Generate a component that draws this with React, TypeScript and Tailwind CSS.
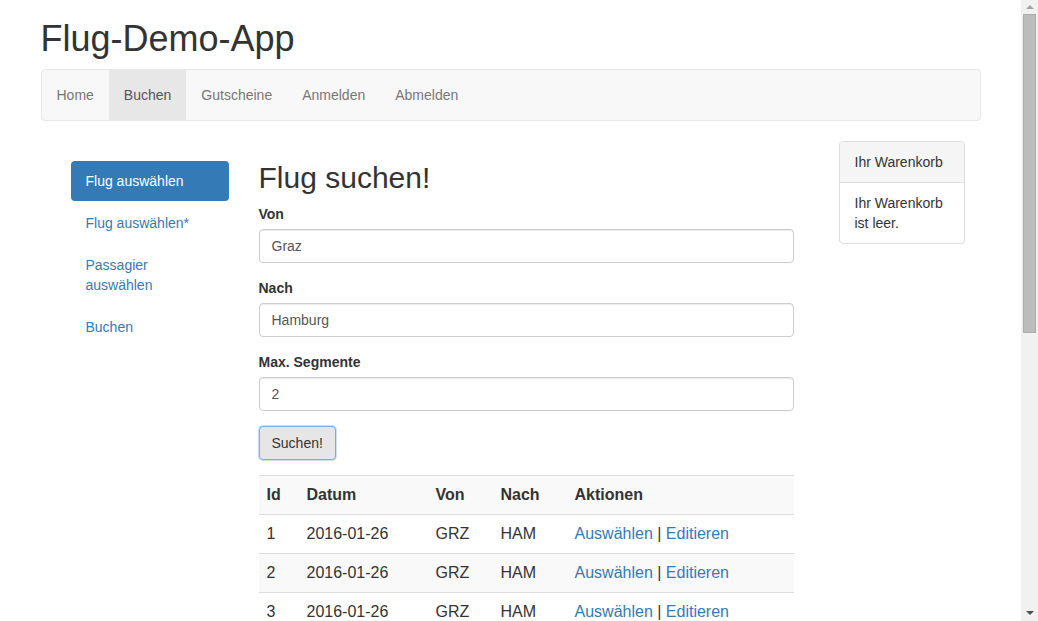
import React from "react";

const menu = [
  { label: "Home", active: false },
  { label: "Buchen", active: true },
  { label: "Gutscheine", active: false },
  { label: "Anmelden", active: false },
  { label: "Abmelden", active: false },
];

const pills = [
  { label: "Flug auswählen", active: true },
  { label: "Flug auswählen*", active: false },
  { label: "Passagier auswählen", active: false },
  { label: "Buchen", active: false },
];

const flights = [
  { id: 1, datum: "2016-01-26", von: "GRZ", nach: "HAM" },
  { id: 2, datum: "2016-01-26", von: "GRZ", nach: "HAM" },
  { id: 3, datum: "2016-01-26", von: "GRZ", nach: "HAM" },
];

function Field({ label, value }: { label: string; value: string }) {
  return (
    <div className="mb-[15px]">
      <label className="block mb-[5px] font-bold text-[14px] leading-[20px]">{label}</label>
      <input
        readOnly
        value={value}
        className="block w-full h-[34px] px-[12px] py-[6px] text-[14px] text-[#555] bg-white border border-[#ccc] rounded-[4px] shadow-[inset_0_1px_1px_rgba(0,0,0,0.075)] outline-none"
      />
    </div>
  );
}

export default function App() {
  return (
    <div className="flex h-[621px] overflow-hidden bg-white text-[#333] text-[14px] leading-[20px] font-['Liberation_Sans',Arial,sans-serif]">
      <div className="flex-1 overflow-hidden">
        <div className="w-[970px] mx-auto px-[15px]">
          <h1 className="mt-[19px] mb-[10px] text-[36px] leading-[1.1]">Flug-Demo-App</h1>

          <nav className="flex min-h-[50px] mb-[20px] bg-[#f8f8f8] border border-[#e7e7e7] rounded-[4px]">
            {menu.map((m) => (
              <a
                key={m.label}
                className={`block px-[15px] py-[15px] leading-[20px] ${
                  m.active ? "bg-[#e7e7e7] text-[#555]" : "text-[#777]"
                }`}
              >
                {m.label}
              </a>
            ))}
          </nav>

          <div className="flex items-start">
            {/* Seitennavigation */}
            <ul className="ml-[30px] mt-[20px] w-[158px] flex flex-col gap-[2px]">
              {pills.map((p) => (
                <li key={p.label}>
                  <a
                    className={`block px-[15px] py-[10px] rounded-[4px] ${
                      p.active ? "bg-[#337ab7] text-white" : "text-[#337ab7]"
                    }`}
                  >
                    {p.label}
                  </a>
                </li>
              ))}
            </ul>

            {/* Suche */}
            <div className="ml-[30px] w-[535px]">
              <h2 className="mt-[20px] mb-[10px] text-[30px] leading-[1.1]">Flug suchen!</h2>
              <Field label="Von" value="Graz" />
              <Field label="Nach" value="Hamburg" />
              <Field label="Max. Segmente" value="2" />
              <div className="mb-[15px]">
                <button className="h-[34px] px-[12px] text-[14px] text-[#333] bg-[#e6e6e6] border border-[#7fa8e4] rounded-[4px] shadow-[0_0_0_1px_rgba(120,160,225,0.35)]">
                  Suchen!
                </button>
              </div>

              <table className="w-full table-fixed border-collapse text-[16px] leading-[22px]">
                <thead>
                  <tr className="bg-[#f9f9f9]">
                    <th className="w-[40px] p-[8px] text-left font-bold border-t border-b border-[#ddd]">Id</th>
                    <th className="w-[129px] p-[8px] text-left font-bold border-t border-b border-[#ddd]">Datum</th>
                    <th className="w-[65px] p-[8px] text-left font-bold border-t border-b border-[#ddd]">Von</th>
                    <th className="w-[74px] p-[8px] text-left font-bold border-t border-b border-[#ddd]">Nach</th>
                    <th className="p-[8px] text-left font-bold border-t border-b border-[#ddd]">Aktionen</th>
                  </tr>
                </thead>
                <tbody>
                  {flights.map((f, i) => (
                    <tr key={f.id} className={i % 2 === 1 ? "bg-[#f9f9f9]" : ""}>
                      <td className="p-[8px] border-b border-[#ddd]">{f.id}</td>
                      <td className="p-[8px] border-b border-[#ddd]">{f.datum}</td>
                      <td className="p-[8px] border-b border-[#ddd]">{f.von}</td>
                      <td className="p-[8px] border-b border-[#ddd]">{f.nach}</td>
                      <td className="p-[8px] border-b border-[#ddd] whitespace-nowrap">
                        <a className="text-[#337ab7]">Auswählen</a> | <a className="text-[#337ab7]">Editieren</a>
                      </td>
                    </tr>
                  ))}
                </tbody>
              </table>
            </div>

            {/* Warenkorb */}
            <div className="ml-[45px] w-[126px] bg-white border border-[#ddd] rounded-[4px]">
              <div className="px-[15px] py-[10px] bg-[#f5f5f5] border-b border-[#ddd] rounded-t-[3px]">
                Ihr Warenkorb
              </div>
              <div className="px-[15px] py-[10px]">Ihr Warenkorb ist leer.</div>
            </div>
          </div>
        </div>
      </div>

      {/* Scrollbar */}
      <div className="w-[17px] h-full bg-[#f1f1f1] flex flex-col items-center">
        <div className="h-[14px] flex items-center justify-center">
          <svg width="8" height="4" viewBox="0 0 8 4">
            <path d="M0 4 L4 0 L8 4 Z" fill="#a3a3a3" />
          </svg>
        </div>
        <div className="w-[13px] h-[319px] bg-[#bcbcbc] border border-[#ababab]" />
        <div className="flex-1" />
        <div className="h-[17px] flex items-center justify-center">
          <svg width="8" height="4" viewBox="0 0 8 4">
            <path d="M0 0 L8 0 L4 4 Z" fill="#505050" />
          </svg>
        </div>
      </div>
    </div>
  );
}
